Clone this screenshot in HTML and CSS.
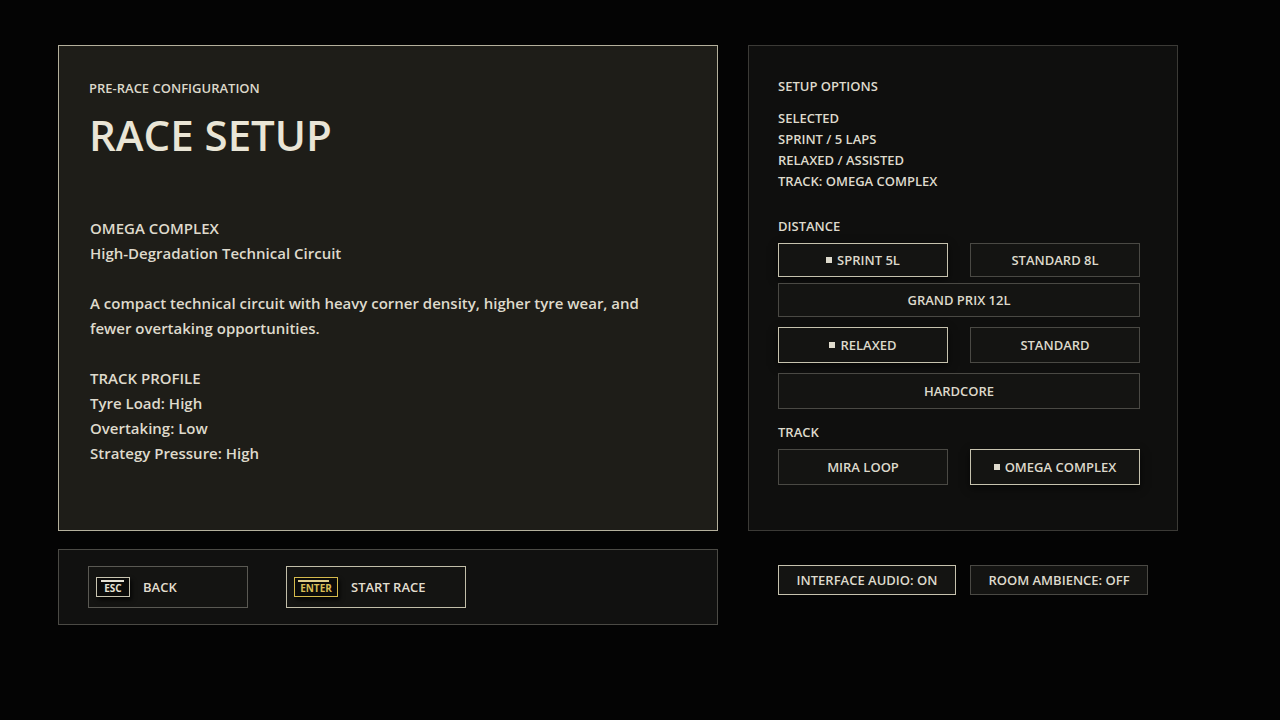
FILE: index.html
```html
<!DOCTYPE html>
<html lang="en">
<head>
  <meta charset="UTF-8">
  <title>Race Setup</title>
  <link rel="stylesheet" href="styles.css">
</head>
<body>

  <div class="screen">
    <!-- Track briefing -->
    <section class="brief">
      <div class="eyebrow">PRE-RACE CONFIGURATION</div>
      <h1>RACE SETUP</h1>

      <div class="copy">
        <p>OMEGA COMPLEX<br>High-Degradation Technical Circuit</p>
        <p>A compact technical circuit with heavy corner density, higher tyre wear, and fewer overtaking opportunities.</p>
        <p>TRACK PROFILE<br>Tyre Load: High<br>Overtaking: Low<br>Strategy Pressure: High</p>
      </div>
    </section>

    <!-- Option picker -->
    <section class="options">
      <div class="heading">SETUP OPTIONS</div>
      <div class="summary">
        SELECTED<br>
        SPRINT / 5 LAPS<br>
        RELAXED / ASSISTED<br>
        TRACK: OMEGA COMPLEX
      </div>

      <div class="heading group-title">DISTANCE</div>
      <div class="choices short">
        <button class="choice on"><span class="mark"></span>SPRINT 5L</button>
        <button class="choice">STANDARD 8L</button>
        <button class="choice wide">GRAND PRIX 12L</button>
      </div>

      <div class="choices gap-top">
        <button class="choice on"><span class="mark"></span>RELAXED</button>
        <button class="choice">STANDARD</button>
        <button class="choice wide">HARDCORE</button>
      </div>

      <div class="heading group-title track-title">TRACK</div>
      <div class="choices">
        <button class="choice">MIRA LOOP</button>
        <button class="choice on"><span class="mark"></span>OMEGA COMPLEX</button>
      </div>
    </section>

    <!-- Footer actions -->
    <div class="actions">
      <button class="action"><span class="key">ESC</span>BACK</button>
      <button class="action primary"><span class="key gold">ENTER</span>START RACE</button>
    </div>

    <div class="toggles">
      <button class="toggle on">INTERFACE AUDIO: ON</button>
      <button class="toggle">ROOM AMBIENCE: OFF</button>
    </div>
  </div>

</body>
</html>
```

FILE: styles.css
```css
* { box-sizing: border-box; }
body { margin: 0; background: #040404; color: #e4e0d2; font-family: "Open Sans", "Noto Sans", sans-serif; font-weight: 600; }
button { font-family: inherit; font-weight: 600; color: inherit; cursor: pointer; }

.screen {
  display: grid; grid-template-columns: 660px 430px; column-gap: 30px; row-gap: 18px;
  padding: 45px 0 0 58px;
}

/* left briefing panel */
.brief { height: 486px; background: #1e1d18; border: 1px solid #b4b09c; padding: 33px 30px 0 30px; }
.eyebrow { font-size: 13px; line-height: 18px; color: #dcd8ca; }
h1 { margin: 13px 0 0; font-size: 42px; line-height: 50px; font-weight: 600; color: #e9e5d6; }
.copy { margin-top: 56px; padding-left: 1px; font-size: 15px; line-height: 25px; color: #dedacc; max-width: 580px; }
.copy p { margin: 0 0 25px; }

/* right options panel */
.options { height: 486px; background: #0f0f0e; border: 1px solid #3b3a36; padding: 31px 30px 0 29px; }
.heading { font-size: 13px; line-height: 18px; color: #dedacc; }
.summary { margin-top: 13px; font-size: 13px; line-height: 21px; color: #dedacc; }
.group-title { margin-top: 25px; }
.track-title { margin-top: 14px; }

.choices { display: grid; grid-template-columns: 170px 170px; column-gap: 22px; row-gap: 10px; margin-top: 8px; }
.choices.short { row-gap: 6px; }
.choices.gap-top { margin-top: 10px; }
.choice {
  height: 36px; background: #141412; border: 1px solid #4a4944; font-size: 13px;
  display: flex; align-items: center; justify-content: center; color: #ddd9cb;
}
.short .choice { height: 34px; }
.choice.wide { grid-column: 1 / 3; }
.choice.on { border-color: #c6c2ae; box-shadow: 0 3px 8px rgba(0,0,0,0.6); }
.mark { width: 6px; height: 6px; background: #dedacc; margin-right: 5px; }

/* bottom action bar */
.actions { height: 76px; background: #111110; border: 1px solid #4b4a45; padding: 16px 0 0 29px; display: flex; gap: 38px; align-items: flex-start; }
.action {
  width: 160px; height: 42px; background: #141412; border: 1px solid #5a5953; font-size: 13px;
  display: flex; align-items: center; padding: 0 0 0 7px; color: #e2decf;
}
.action.primary { width: 180px; border-color: #c2bea9; }
.key {
  position: relative; height: 20px; min-width: 34px; margin-right: 13px; padding: 3px 4px 0;
  border: 1px solid #c8c4b0; background: #0b0b0a; font-size: 10px; line-height: 15px; font-weight: 700; color: #e6e2d4;
  text-align: center; box-shadow: 2px 3px 4px rgba(0,0,0,0.7);
}
.key::before { content: ""; position: absolute; left: 4px; right: 5px; top: 2px; height: 2px; background: #e6e2d4; }
.key.gold { min-width: 44px; border-color: #d5ba4c; color: #d8bd55; }
.key.gold::before { background: #e0cf8a; left: 3px; right: 8px; }

/* sound toggles */
.toggles { display: flex; gap: 14px; padding: 16px 0 0 30px; }
.toggle { width: 178px; height: 30px; background: #141412; border: 1px solid #4a4944; font-size: 13px; color: #dedacc; }
.toggle.on { border-color: #c6c2ae; }
```
